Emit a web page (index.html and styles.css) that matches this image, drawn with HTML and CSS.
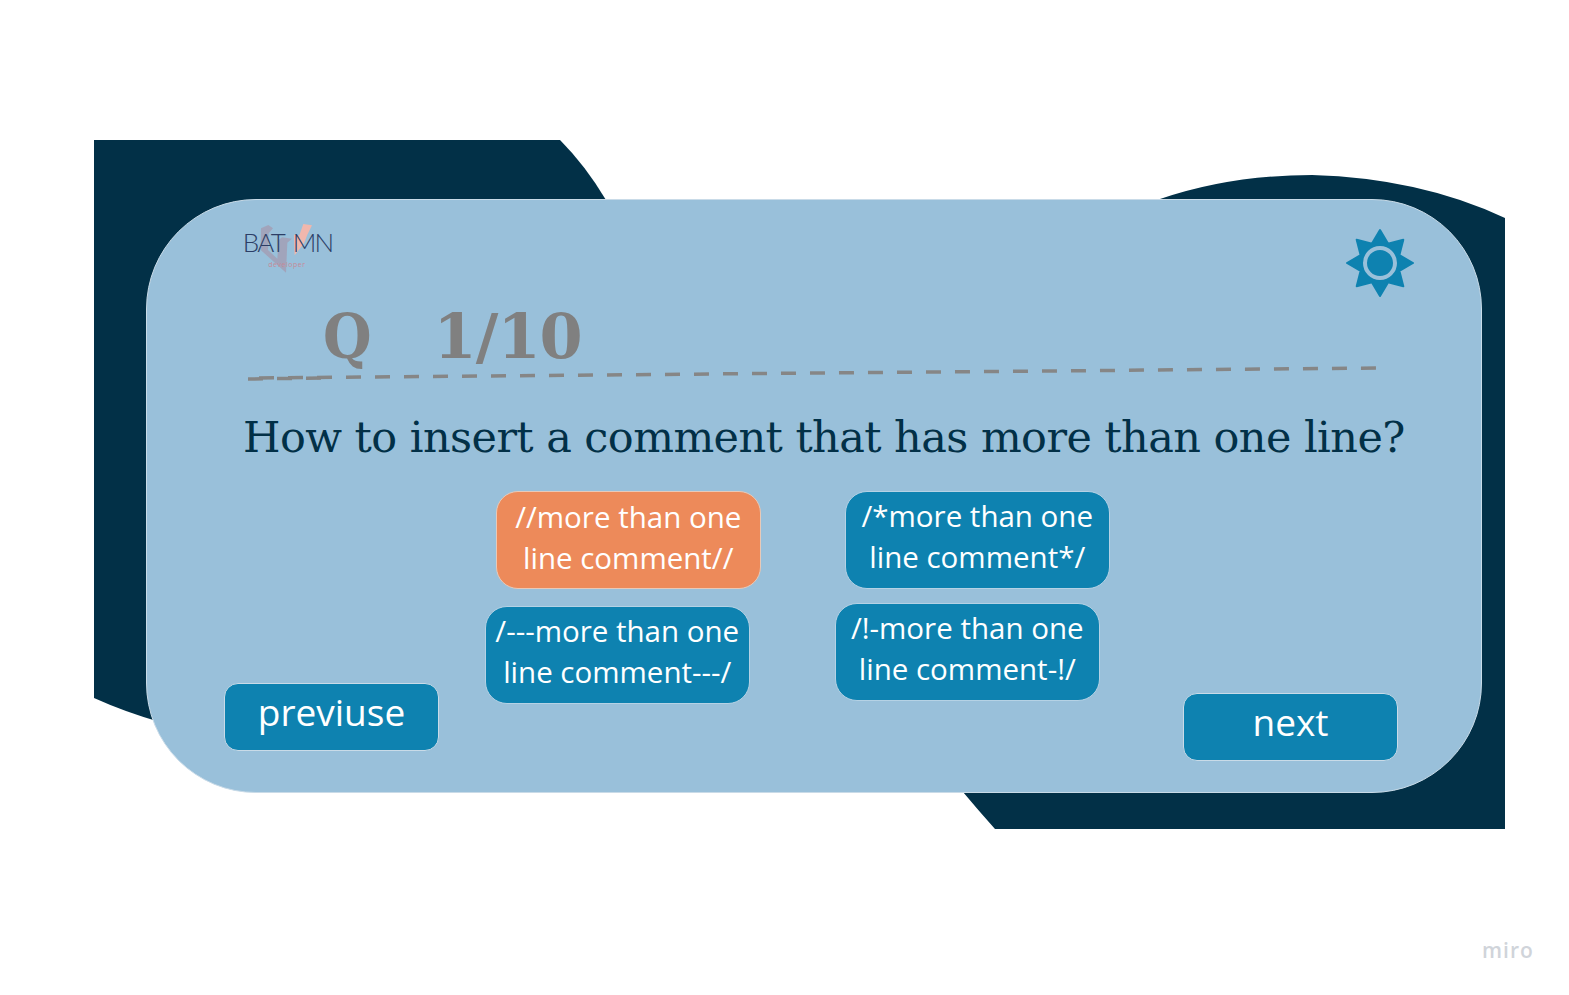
FILE: index.html
```html
<!DOCTYPE html>
<html>
<head>
    <title>Quiz</title>
    <link rel="stylesheet" href="styles.css">
</head>
<body>
    <div class="stage">
        <svg class="backdrop" width="1569" height="995" viewBox="0 0 1569 995">
            <path d="M94 140H560Q585 165 606 200L400 500L160 722Q125 712 94 698Z" fill="#023047"/>
            <path d="M1160 199Q1230 175 1312 175Q1420 178 1505 218V829H995Q978 810 963 792L1300 400Z" fill="#023047"/>
        </svg>
        <div class="card">
            <svg class="logo" width="200" height="100" viewBox="0 0 600 300">
                <path d="M183 85 205 75 219 85 206 100 204 150 232 176 236 120 246 112 276 116 262 128 258 218 182 150Z" fill="#a49bb0" opacity="0.75"/>
                <path d="M310 72 336 76 322 104 312 130 284 166 282 104 298 106Z" fill="#f0b7ad"/>
                <text x="128" y="155" class="logo-text">BAT</text>
                <text x="278" y="155" class="logo-text">MN</text>
                <text x="205" y="200" class="logo-sub">developer</text>
            </svg>
            <svg class="gear" width="70" height="70" viewBox="-35 -35 70 70">
                <path d="M0-33 8-19.4 23.3-23.3 19.4-8 33 0 19.4 8 23.3 23.3 8 19.4 0 33-8 19.4-23.3 23.3-19.4 8-33 0-19.4-8-23.3-23.3-8-19.4Z" fill="#0e82b0" stroke="#0e82b0" stroke-width="2" stroke-linejoin="round"/>
                <circle r="15" fill="none" stroke="#99c0da" stroke-width="4"/>
            </svg>
            <div class="score"><span class="score-q">Q</span><span class="score-num">1/10</span></div>
            <svg class="dash" width="1140" height="20" viewBox="0 0 1140 20">
                <line x1="13" y1="14" x2="1136" y2="4" stroke="#868686" stroke-width="3.5" stroke-dasharray="15 14"/>
                <line x1="2" y1="15" x2="78" y2="14" stroke="#868686" stroke-width="3.5" stroke-dasharray="15 14"/>
            </svg>
            <h1 class="question">How to insert a comment that has more than one line?</h1>
            <div class="answers">
                <div class="col">
                    <button class="answer picked">//more than one<br>line comment//</button>
                    <button class="answer shift-left">/---more than one<br>line comment---/</button>
                </div>
                <div class="col col-right">
                    <button class="answer">/*more than one<br>line comment*/</button>
                    <button class="answer shift-left">/!-more than one<br>line comment-!/</button>
                </div>
            </div>
            <div class="nav">
                <button class="nav-btn">previuse</button>
                <button class="nav-btn nav-next">next</button>
            </div>
        </div>
        <div class="miro">miro</div>
    </div>
</body>
</html>
```

FILE: styles.css
```css
body {
    margin: 0;
    background-color: #fff;
    font-family: "Open Sans", sans-serif;
}

.stage {
    position: relative;
    width: 1569px;
    height: 995px;
    overflow: hidden;
    padding-top: 199px;
    box-sizing: border-box;
}

.backdrop {
    position: absolute;
    left: 0;
    top: 0;
}

.card {
    position: relative;
    width: 1336px;
    height: 594px;
    margin-left: 146px;
    background-color: #99c0da;
    border: 1px solid #c9dbe8;
    box-sizing: border-box;
    border-radius: 110px;
}

.logo {
    position: absolute;
    left: 53px;
    top: 0;
}

.logo-text {
    font-family: "Lato", sans-serif;
    font-weight: 300;
    font-size: 78px;
    letter-spacing: -5px;
    fill: #2c3e66;
}

.logo-sub {
    font-family: "Open Sans", sans-serif;
    font-size: 21px;
    letter-spacing: 1.5px;
    fill: #c58a98;
}

.gear {
    position: absolute;
    left: 1198px;
    top: 28px;
}

.score {
    display: flex;
    gap: 61px;
    padding: 99px 0 0 176px;
    font-family: "DejaVu Serif", serif;
    font-weight: bold;
    font-size: 62px;
    line-height: 76px;
    color: #808080;
}

.score-q {
    font-family: "DejaVu Serif Condensed", "DejaVu Serif", serif;
    letter-spacing: 1px;
}

.score-num {
    letter-spacing: -1px;
}

.dash {
    display: block;
    margin: -11px 0 0 99px;
}

.question {
    margin: 23px 0 0 96px;
    font-family: "DejaVu Serif", serif;
    font-weight: normal;
    font-size: 43px;
    line-height: 60px;
    letter-spacing: -0.57px;
    white-space: nowrap;
    color: #023047;
}

.answers {
    display: flex;
    gap: 84.5px;
    margin: 24px 0 0 349px;
}

.col {
    display: flex;
    flex-direction: column;
    gap: 17px;
    align-items: flex-start;
}

.col-right {
    gap: 14px;
}

.answer {
    width: 264.5px;
    height: 98px;
    background-color: #0e82b0;
    color: #fff;
    border: 1px solid #b5d2e5;
    border-radius: 22px;
    font-family: "Open Sans", sans-serif;
    font-size: 29.5px;
    line-height: 41px;
    padding: 0 0 8px;
    white-space: nowrap;
}

.picked {
    background-color: #ed8a5a;
    border-color: #e8c9b8;
    padding-bottom: 6px;
}

.shift-left {
    margin-left: -11px;
}

.col-right .shift-left {
    margin-left: -10px;
}

.nav {
    position: absolute;
    left: 77px;
    right: 83px;
    bottom: 31px;
    display: flex;
    justify-content: space-between;
    align-items: flex-end;
}

.nav-btn {
    width: 215px;
    height: 68px;
    background-color: #0e82b0;
    color: #fff;
    border: 1px solid #c9dbe8;
    border-radius: 14px;
    font-family: "Open Sans", sans-serif;
    font-size: 37px;
    padding: 0 0 12px;
    margin-bottom: 10px;
}

.nav-next {
    margin-bottom: 0;
}

.miro {
    position: absolute;
    left: 1482px;
    top: 936px;
    font-family: "Open Sans", sans-serif;
    font-weight: 600;
    font-size: 21px;
    letter-spacing: 1px;
    color: #d0d4da;
}
```
